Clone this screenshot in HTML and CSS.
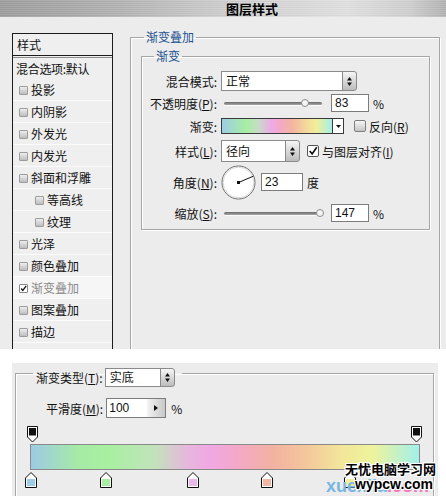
FILE: index.html
```html
<!DOCTYPE html>
<html lang="zh">
<head>
<meta charset="utf-8">
<title>图层样式</title>
<link rel="stylesheet" href="styles.css">
</head>
<body>
<div class="shot1">
  <div class="titlebar">图层样式</div>
  <div class="dlg">
    <div class="list">
      <div class="list-head">样式</div>
      <div class="list-blend">混合选项:默认</div>
      <div class="item"><span class="cb"></span>投影</div>
      <div class="item"><span class="cb"></span>内阴影</div>
      <div class="item"><span class="cb"></span>外发光</div>
      <div class="item"><span class="cb"></span>内发光</div>
      <div class="item"><span class="cb"></span>斜面和浮雕</div>
      <div class="item sub"><span class="cb"></span>等高线</div>
      <div class="item sub"><span class="cb"></span>纹理</div>
      <div class="item"><span class="cb"></span>光泽</div>
      <div class="item"><span class="cb"></span>颜色叠加</div>
      <div class="item sel"><span class="cb on"><svg width="9" height="9" viewBox="0 0 9 9"><path d="M1.5 4.5 L3.6 7 L8 1.2" fill="none" stroke="#111" stroke-width="1.6"/></svg></span>渐变叠加</div>
      <div class="item"><span class="cb"></span>图案叠加</div>
      <div class="item"><span class="cb"></span>描边</div>
      <div class="item"></div>
    </div>
    <fieldset class="grp outer">
      <legend class="leg">渐变叠加</legend>
      <fieldset class="grp inner">
        <legend class="leg leg-inner">渐变</legend>
        <div class="row r1">
          <span class="lbl">混合模式:</span>
          <div class="select sel-blend"><span class="sel-text">正常</span><span class="spin"><svg width="7" height="11" viewBox="0 0 7 11"><path d="M3.5 1 L6 4.5 H1 Z M3.5 10 L6 6.5 H1 Z" fill="#111"/></svg></span></div>
        </div>
        <div class="row r2">
          <span class="lbl">不透明度(<u>P</u>):</span>
          <div class="slider"><div class="track"></div><span class="thumb" style="left:77px"></span></div>
          <span class="num">83</span><span class="unit">%</span>
        </div>
        <div class="row r3">
          <span class="lbl">渐变:</span>
          <div class="gbar"><div class="gfill"></div><div class="gdrop"><svg width="5" height="3" viewBox="0 0 5 3"><path d="M0 0 H5 L2.5 3 Z" fill="#111"/></svg></div></div>
          <span class="chk chk-rev"></span><span class="chk-text">反向(<u>R</u>)</span>
        </div>
        <div class="row r4">
          <span class="lbl">样式(<u>L</u>):</span>
          <div class="select sel-style"><span class="sel-text">径向</span><span class="spin"><svg width="7" height="11" viewBox="0 0 7 11"><path d="M3.5 1 L6 4.5 H1 Z M3.5 10 L6 6.5 H1 Z" fill="#111"/></svg></span></div>
          <span class="chk chk-on chk-align"><svg width="12" height="12" viewBox="0 0 12 12"><path d="M2 6 L5 9.5 L10.5 1.5" fill="none" stroke="#111" stroke-width="2"/></svg></span><span class="chk-text">与图层对齐(<u>I</u>)</span>
        </div>
        <div class="row r5">
          <span class="lbl">角度(<u>N</u>):</span>
          <svg class="dial" width="35" height="35" viewBox="0 0 35 35"><circle cx="17.5" cy="17.5" r="16.5" fill="#fff" stroke="#6e6e6e"/><circle cx="17.5" cy="17.5" r="15.3" fill="none" stroke="#d8d8d8"/><line x1="17.5" y1="17.5" x2="32.3" y2="11.2" stroke="#111" stroke-width="1"/><rect x="16" y="16" width="3" height="3" fill="#111"/></svg>
          <span class="num num-angle">23</span><span class="unit">度</span>
        </div>
        <div class="row r6">
          <span class="lbl">缩放(<u>S</u>):</span>
          <div class="slider"><div class="track"></div><span class="thumb" style="left:92px"></span></div>
          <span class="num">147</span><span class="unit">%</span>
        </div>
      </fieldset>
    </fieldset>
  </div>
</div>
<div class="gap"></div>
<div class="shot2">
  <fieldset class="grp f2">
    <legend class="f2leg"><div class="f2leg-row"><span class="f2lbl">渐变类型(<u>T</u>):</span><div class="select sel-type"><span class="sel-text">实底</span><span class="spin"><svg width="7" height="11" viewBox="0 0 7 11"><path d="M3.5 1 L6 4.5 H1 Z M3.5 10 L6 6.5 H1 Z" fill="#111"/></svg></span></div></div></legend>
    <div class="smooth">
      <span class="f2lbl2">平滑度(<u>M</u>):</span>
      <div class="num num-smooth"><span class="ntext">100</span><span class="nbtn"><svg width="4" height="6" viewBox="0 0 4 6"><path d="M0 0 L4 3 L0 6 Z" fill="#111"/></svg></span></div>
      <span class="unit unit2">%</span>
    </div>
    <div class="markers">
      <svg width="12" height="17" viewBox="0 0 12 17"><path d="M0.5 0.5 H10.5 V11 L5.5 16 L0.5 11 Z" fill="#fff" stroke="#111"/><rect x="2" y="2" width="7" height="7.5" fill="#111"/></svg>
      <svg width="12" height="17" viewBox="0 0 12 17"><path d="M0.5 0.5 H10.5 V11 L5.5 16 L0.5 11 Z" fill="#fff" stroke="#111"/><rect x="2" y="2" width="7" height="7.5" fill="#111"/></svg>
    </div>
    <div class="bigbar"></div>
    <div class="stops">
      <svg class="stop" style="left:0.3%" width="12" height="16" viewBox="0 0 12 16"><path d="M6 0.5 L11.5 6 V15.5 H0.5 V6 Z" fill="#fff" stroke="#111"/><rect x="2" y="7" width="8" height="7" fill="#9dcde6"/></svg>
      <svg class="stop" style="left:19.5%" width="12" height="16" viewBox="0 0 12 16"><path d="M6 0.5 L11.5 6 V15.5 H0.5 V6 Z" fill="#fff" stroke="#111"/><rect x="2" y="7" width="8" height="7" fill="#a9eea2"/></svg>
      <svg class="stop" style="left:41.8%" width="12" height="16" viewBox="0 0 12 16"><path d="M6 0.5 L11.5 6 V15.5 H0.5 V6 Z" fill="#fff" stroke="#111"/><rect x="2" y="7" width="8" height="7" fill="#ebb8ea"/></svg>
      <svg class="stop" style="left:60.8%" width="12" height="16" viewBox="0 0 12 16"><path d="M6 0.5 L11.5 6 V15.5 H0.5 V6 Z" fill="#fff" stroke="#111"/><rect x="2" y="7" width="8" height="7" fill="#f1b7a3"/></svg>
      <svg class="stop" style="left:82%" width="12" height="16" viewBox="0 0 12 16"><path d="M6 0.5 L11.5 6 V15.5 H0.5 V6 Z" fill="#fff" stroke="#111"/><rect x="2" y="7" width="8" height="7" fill="#f3ee9c"/></svg>
    </div>
  </fieldset>
  <div class="wm-back"><span class="wm-blue">xuexila</span><span class="wm-pink">.com</span></div>
  <div class="wm-cn">无忧电脑学习网</div>
  <div class="wm-en">wypcw.com</div>
</div>
</body>
</html>
```
FILE: styles.css
```css
* { box-sizing: border-box; }
html, body { margin: 0; padding: 0; background: #fff; }
body {
  width: 446px; height: 496px; overflow: hidden;
  font-family: "Liberation Sans", "Noto Sans CJK SC", sans-serif;
  font-size: 12px; color: #111;
}
u { text-decoration: underline; text-underline-offset: 1px; }

.shot1 { height: 349px; background: #ececec; overflow: hidden; }
.titlebar {
  height: 17px; line-height: 17px; padding-left: 58px; text-align: center;
  font-family: "Noto Sans CJK SC", sans-serif; font-weight: bold; font-size: 13px; color: #000;
  background:
    repeating-linear-gradient(0deg, rgba(255,255,255,0.10) 0 1px, rgba(0,0,0,0.04) 1px 2px),
    linear-gradient(to right, #9e9e9e 0%, #b2b2b2 25%, #cfcfcf 50%, #e2e2e2 78%, #d0d0d0 92%, #b4b4b4 100%);
}
.dlg { display: flex; align-items: flex-start; padding: 13px 0 0 12px; }

/* style list */
.list {
  flex: none; width: 101px; height: 340px; margin-top: 3px;
  border-left: 1px solid #1c1c1c; border-right: 1px solid #1c1c1c;
  background: #efefef; font-family: "Noto Sans CJK SC", sans-serif;
}
.list-head {
  height: 23px; line-height: 21px; padding-left: 4px;
  border-top: 1px solid #1c1c1c; border-bottom: 1px solid #1c1c1c;
}
.list-blend {
  height: 22px; line-height: 21px; margin-top: 1px; padding-left: 3px;
  border-top: 1px solid #8e8e8e; letter-spacing: -0.3px;
}
.item {
  display: flex; align-items: center; height: 22px; padding-left: 6px;
  border-bottom: 1px solid #fbfbfb;
}
.item.sub { padding-left: 22px; }
.item.sel { background: #f6f6f6; color: #8a8a8a; }
.cb {
  flex: none; width: 9px; height: 9px; margin: 2px 3px 0 0;
  border: 1px solid #9c9c9c; border-radius: 1px;
  background: linear-gradient(#eeeeee, #bdbdbd);
  display: flex; align-items: center; justify-content: center;
}
.cb.on { background: #fff; border-color: #888; }
.cb.on svg { display: block; }

/* group boxes */
.grp {
  margin: 0; padding: 0; min-width: 0;
  border: 1px solid #a6a6a6;
  box-shadow: inset 1px 1px 0 #fff, 1px 1px 0 #fff;
}
.outer { flex: none; margin-left: 17px; width: 310px; height: 340px; }
.leg {
  margin-left: 13px; padding: 0 2px; height: 14px; line-height: 14px;
  font-family: "Noto Sans CJK SC", sans-serif; font-size: 12px; color: #22518f;
}
.inner { margin: 5px 0 0 10px; width: 289px; padding: 7px 0 3px 0; }
.leg-inner { margin-left: 12px; }

.row { display: flex; align-items: center; font-family: "Noto Sans CJK SC", "Liberation Sans", sans-serif; }
.r1 { height: 22px; }
.r2 { height: 22px; }
.r3 { height: 24px; }
.r4 { height: 26px; }
.r5 { height: 36px; }
.r6 { height: 26px; }
.lbl { flex: none; width: 75px; text-align: right; margin-right: 4px; white-space: nowrap; }

.select { display: flex; height: 20px; flex: none; }
.sel-text {
  flex: 1; border: 1px solid #8a8a8a; background: #fff; padding-left: 4px;
  line-height: 17px; font-family: "Noto Sans CJK SC", sans-serif;
}
.spin {
  flex: none; width: 15px; margin-left: -1px;
  border: 1px solid #8a8a8a; border-radius: 0 3px 3px 0;
  background: linear-gradient(#f6f6f6, #bcbcbc);
  display: flex; align-items: center; justify-content: center;
}
.spin svg { display: block; }
.sel-blend { width: 136px; }
.sel-style { width: 79px; height: 22px; }
.sel-style .sel-text { line-height: 19px; }

.slider { flex: none; position: relative; width: 98px; height: 10px; margin-left: 3px; }
.track {
  margin-top: 4px; height: 3px; border-radius: 2px;
  background: linear-gradient(#6a6a6a, #a8a8a8);
  box-shadow: 0 1px 0 #fafafa;
}
.thumb {
  position: absolute; top: 1px; width: 8px; height: 8px; border-radius: 50%;
  background: #f4f4f4; border: 1px solid #8c8c8c;
}
.num {
  flex: none; width: 38px; height: 18px; margin-left: 9px;
  border: 1px solid #7c7c7c; background: #fff; padding-left: 3px;
  line-height: 16px; font-family: "Liberation Sans", sans-serif; font-size: 12px;
}
.unit { margin-left: 4px; font-family: "Noto Sans CJK SC", "Liberation Sans", sans-serif; }

.gbar { flex: none; display: flex; width: 123px; height: 16px; border: 1px solid #3a3a3a; }
.gfill {
  flex: 1;
  background: linear-gradient(to right, #9dcde6 0%, #a8eea2 22%, #c6dcc8 33%, #eeaae6 45%, #f3a9c6 53%, #f2b5a0 64%, #f3d59c 75%, #f1ef9a 86%, #a4efe8 100%);
}
.gdrop {
  flex: none; width: 11px; border-left: 1px solid #3a3a3a; background: #fff;
  display: flex; align-items: center; justify-content: center;
}
.gdrop svg { display: block; }
.chk {
  flex: none; width: 12px; height: 12px; border: 1px solid #7e7e7e; border-radius: 2px;
  background: linear-gradient(#f6f6f6, #c4c4c4);
  display: flex; align-items: center; justify-content: center;
}
.chk svg { display: block; }
.chk-on { background: #fff; border-color: #555; }
.chk-rev { margin-left: 10px; }
.chk-align { margin-left: 7px; }
.chk-text { margin-left: 3px; white-space: nowrap; }
.dial { flex: none; display: block; }
.num.num-angle { width: 42px; margin-left: 5px; }

/* second picture */
.gap { height: 14px; }
.shot2 {
  position: relative; margin-left: 12px; width: 426px; height: 133px;
  background: #ececec; overflow: hidden; padding-top: 5px;
  font-family: "Noto Sans CJK SC", "Liberation Sans", sans-serif;
}
.f2 { margin-left: 3px; width: 419px; height: 200px; }
.f2leg { height: 10px; margin-left: 17px; padding: 0 7px 0 3px; }
.f2leg-row { display: flex; align-items: flex-start; height: 10px; }
.f2lbl { line-height: 19px; white-space: nowrap; }
.sel-type { width: 70px; height: 19px; margin-left: 2px; }
.sel-type .sel-text { line-height: 16px; }
.smooth { display: flex; align-items: center; height: 20px; margin-top: 20px; padding-left: 30px; }
.f2lbl2 { white-space: nowrap; }
.num.num-smooth {
  display: flex; width: 60px; height: 20px; margin-left: 3px; padding-left: 0;
}
.ntext { flex: 1; padding-left: 2px; line-height: 18px; }
.nbtn {
  flex: none; width: 18px; background: linear-gradient(to right, #f4f4f4, #c8c8c8);
  display: flex; align-items: center; justify-content: center;
}
.nbtn svg { display: block; }
.unit2 { margin-left: 5px; }
.markers {
  display: flex; justify-content: space-between; margin: 8px 0 0 10px;
  width: 398px; height: 16px; padding: 0 1px;
}
.markers svg { display: block; }
.bigbar {
  margin: 2px 0 0 14px; width: 390px; height: 26px; border: 1px solid #8a8a8a;
  background: linear-gradient(to right, #9ccbe4 0%, #a6eaa6 12%, #a8f0a0 20%, #c2e2bc 32%, #e6b8dc 40%, #f0a8e4 46%, #f4a8c8 53%, #f2b1a2 62%, #f4c49c 70%, #f2e69a 80%, #eef39c 88%, #a2f0ea 100%);
}
.stops { position: relative; margin: 2px 0 0 14px; width: 390px; height: 16px; }
.stop { position: absolute; top: 0; margin-left: -6px; display: block; }

.wm-back {
  position: absolute; left: 314px; top: 114px;
  font-family: "Liberation Sans", sans-serif; font-weight: bold; font-size: 18px; line-height: 18px;
}
.wm-blue { color: #79b6e2; }
.wm-pink { color: #f27ab8; }
.wm-cn, .wm-en {
  position: absolute; color: #000; font-weight: bold;
  text-shadow: 1px 0 #fff, -1px 0 #fff, 0 1px #fff, 0 -1px #fff, 1px 1px #fff, -1px -1px #fff, 1px -1px #fff, -1px 1px #fff;
}
.wm-cn { left: 333px; top: 98px; font-family: "Noto Sans CJK SC", sans-serif; font-size: 13px; line-height: 16px; }
.wm-en { left: 343px; top: 113px; font-family: "Liberation Sans", sans-serif; font-size: 14px; line-height: 16px; }
```
